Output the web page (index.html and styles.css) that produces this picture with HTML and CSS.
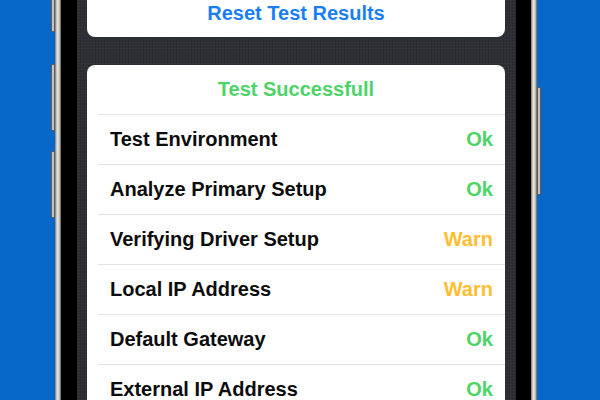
FILE: index.html
```html
<!DOCTYPE html>
<html lang="en">
<head>
<meta charset="utf-8">
<title>Network Test</title>
<link rel="stylesheet" href="styles.css">
</head>
<body>
  <div class="phone">
    <span class="side-btn btn-l1"></span>
    <span class="side-btn btn-l2"></span>
    <span class="side-btn btn-l3"></span>
    <span class="side-btn btn-r1"></span>
    <div class="rail"></div>
    <div class="bezel bezel-left"></div>
    <div class="screen">
      <div class="card card-top">
        <div class="action">Reset Test Results</div>
      </div>
      <div class="card">
        <div class="header">Test Successfull</div>
        <div class="row"><span class="label">Test Environment</span><span class="ok">Ok</span></div>
        <div class="row"><span class="label">Analyze Primary Setup</span><span class="ok">Ok</span></div>
        <div class="row"><span class="label">Verifying Driver Setup</span><span class="warn">Warn</span></div>
        <div class="row"><span class="label">Local IP Address</span><span class="warn">Warn</span></div>
        <div class="row"><span class="label">Default Gateway</span><span class="ok">Ok</span></div>
        <div class="row"><span class="label">External IP Address</span><span class="ok">Ok</span></div>
      </div>
    </div>
    <div class="bezel bezel-right"></div>
    <div class="rail"></div>
  </div>
</body>
</html>
```
FILE: styles.css
```css
html, body {
  margin: 0;
  padding: 0;
  height: 100%;
  overflow: hidden;
}

body {
  background: #0567c8;
  font-family: "Liberation Sans", Arial, sans-serif;
}

.phone {
  position: relative;
  display: flex;
  margin-left: 55px;
  width: 482px;
  height: 400px;
}

.rail {
  width: 6px;
  flex: none;
  background: linear-gradient(to right, #77746e 0%, #d9d6d0 30%, #ebe8e2 50%, #b3b0a9 78%, #5b5954 100%);
}

.bezel {
  flex: none;
  background: #000;
}

.bezel-left { width: 16px; }
.bezel-right { width: 15px; }

.side-btn {
  position: absolute;
  width: 4px;
  box-sizing: border-box;
  border: 1px solid #5f5c57;
  border-radius: 1px;
  background: linear-gradient(to right, #a9a69f, #e4e1db 50%, #a19e97);
}

.btn-l1 { left: -4px; top: -10px; height: 42px; }
.btn-l2 { left: -4px; top: 64px; height: 67px; }
.btn-l3 { left: -4px; top: 151px; height: 67px; }
.btn-r1 { right: -4px; top: 87px; height: 108px; }

.screen {
  flex: 1;
  display: flex;
  flex-direction: column;
  gap: 28px;
  padding: 0 11px 0 10px;
  background-color: #2c3034;
  background-image:
    repeating-linear-gradient(0deg, rgba(255,255,255,0.025) 0 1px, transparent 1px 3px),
    repeating-linear-gradient(90deg, rgba(0,0,0,0.12) 0 1px, transparent 1px 3px);
  overflow: hidden;
}

.card {
  flex: none;
  background: #fff;
  border-radius: 8px;
}

.card-top {
  margin-top: -10px;
}

.action {
  height: 47px;
  line-height: 47px;
  text-align: center;
  color: #1a7ff7;
  font-weight: bold;
  font-size: 20px;
}

.header {
  height: 49px;
  line-height: 49px;
  text-align: center;
  color: #4cd468;
  font-weight: bold;
  font-size: 20px;
}

.row {
  display: flex;
  justify-content: space-between;
  align-items: center;
  height: 49px;
  margin-left: 11px;
  padding: 0 12px;
  border-top: 1px solid #e3e3e3;
  font-weight: bold;
  font-size: 20px;
}

.label {
  color: #0c0c0c;
}

.ok {
  color: #4cd468;
}

.warn {
  color: #fdbe33;
}
```
